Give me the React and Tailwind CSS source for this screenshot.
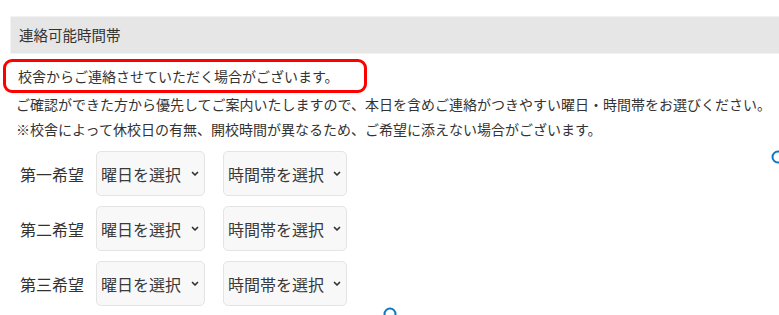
import React from 'react';

const rows = ['第一希望', '第二希望', '第三希望'];

const Chevron = () => (
    <svg width="8" height="6" viewBox="0 0 8 6" className="shrink-0">
        <path d="M1.5 1.5 L4 4 L6.5 1.5" fill="none" stroke="#333" strokeWidth="1.7" strokeLinecap="round" strokeLinejoin="round" />
    </svg>
);

const FakeSelect = ({ label, width }) => (
    <div
        className={`${width} h-[45px] flex items-center justify-between pl-[4px] pr-[5px] bg-[#f8f8f8] border border-[#e4e4e4] rounded-[5px] text-[16px] text-[#3a3a3a]`}
    >
        <span>{label}</span>
        <Chevron />
    </div>
);

const Handle = ({ className }) => (
    <svg width="14" height="14" viewBox="0 0 14 14" className={`absolute ${className}`}>
        <circle cx="7" cy="7" r="5.5" fill="white" stroke="#0a79c2" strokeWidth="2" />
    </svg>
);

export default function App() {
    return (
        <div className="relative w-[779px] h-[315px] overflow-hidden bg-white text-[#333] font-['Noto_Sans_CJK_JP','Noto_Sans',sans-serif]">
            {/* 見出し */}
            <div className="pt-[16px] pl-[10px]">
                <div className="w-[800px] h-[38px] flex items-center pl-[8px] bg-[#e6e6e6] border border-[#f2f2f2] text-[14.5px]">
                    連絡可能時間帯
                </div>
            </div>

            {/* 注意書き */}
            <div className="ml-[3px] mt-[5px] w-[364px] h-[34px] flex items-center pl-[12px] border-[3px] border-[#ff0000] rounded-[9px] text-[14px]">
                校舎からご連絡させていただく場合がございます。
            </div>
            <div className="pl-[16px] text-[14px] leading-[25px] -mt-[1px]">
                <p>ご確認ができた方から優先してご案内いたしますので、本日を含めご連絡がつきやすい曜日・時間帯をお選びください。</p>
                <p>※校舎によって休校日の有無、開校時間が異なるため、ご希望に添えない場合がございます。</p>
            </div>

            {/* 希望日時 */}
            <div className="mt-[9px] flex flex-col gap-[10px] pl-[20px]">
                {rows.map((r) => (
                    <div key={r} className="flex items-center">
                        <span className="w-[76px] text-[16px]">{r}</span>
                        <FakeSelect label="曜日を選択" width="w-[109px]" />
                        <div className="w-[18px]" />
                        <FakeSelect label="時間帯を選択" width="w-[124px]" />
                    </div>
                ))}
            </div>

            <Handle className="left-[771px] top-[150px]" />
            <Handle className="left-[383px] top-[307px]" />
        </div>
    );
}
